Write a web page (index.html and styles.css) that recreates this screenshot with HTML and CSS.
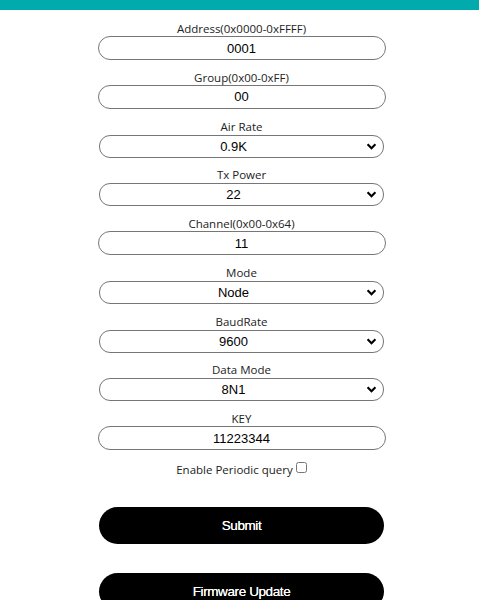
FILE: index.html
```html
<!DOCTYPE html>
<html lang="en">
<head>
	<meta charset="UTF-8">
	<title>LoRa Config</title>
	<link rel="stylesheet" href="styles.css">
</head>
<body>
	<div class="topbar"></div>
	<form class="config" onsubmit="return false;">
		<div class="field">
			<label for="addr">Address(0x0000-0xFFFF)</label>
			<input type="text" id="addr" value="0001">
		</div>
		<div class="field">
			<label for="group">Group(0x00-0xFF)</label>
			<input type="text" id="group" value="00">
		</div>
		<div class="field">
			<label for="airrate">Air Rate</label>
			<select id="airrate">
				<option>0.3K</option>
				<option>1.2K</option>
				<option selected>0.9K</option>
			</select>
		</div>
		<div class="field">
			<label for="txpower">Tx Power</label>
			<select id="txpower">
				<option selected>22</option>
				<option>17</option>
				<option>13</option>
				<option>10</option>
			</select>
		</div>
		<div class="field">
			<label for="channel">Channel(0x00-0x64)</label>
			<input type="text" id="channel" value="11">
		</div>
		<div class="field">
			<label for="mode">Mode</label>
			<select id="mode">
				<option selected>Node</option>
				<option>Relay</option>
			</select>
		</div>
		<div class="field">
			<label for="baud">BaudRate</label>
			<select id="baud">
				<option selected>9600</option>
				<option>115200</option>
			</select>
		</div>
		<div class="field">
			<label for="datamode">Data Mode</label>
			<select id="datamode">
				<option selected>8N1</option>
				<option>8E1</option>
				<option>8O1</option>
			</select>
		</div>
		<div class="field">
			<label for="key">KEY</label>
			<input type="text" id="key" value="11223344">
		</div>
		<div class="check">
			<label for="periodic">Enable Periodic query</label>
			<input type="checkbox" id="periodic">
		</div>
		<button type="submit" class="btn">Submit</button>
		<button type="button" class="btn btn-fw">Firmware Update</button>
	</form>
</body>
</html>
```

FILE: styles.css
```css
* {
	margin: 0;
	padding: 0;
	box-sizing: border-box;
}
body {
	font-family: "Open Sans", "Noto Sans", sans-serif;
	background: #fff;
	color: #000;
}
.topbar {
	height: 10px;
	background: #00aaad;
}
.config {
	width: 288px;
	margin: 12px auto 0;
	position: relative;
	left: 2px;
	display: flex;
	flex-direction: column;
	align-items: center;
}
.field {
	width: 100%;
	display: flex;
	flex-direction: column;
	align-items: center;
	margin-bottom: 10.75px;
}
.field label {
	font-size: 11.5px;
	line-height: 14px;
	color: #222;
}
.field input,
.field select {
	font-family: "Liberation Sans", Arial, sans-serif;
	font-size: 13px;
	color: #000;
	text-align: center;
	background-color: #fff;
	outline: none;
}
.field input {
	width: 288px;
	height: 24px;
	border: 1px solid #767676;
	border-radius: 12px;
}
.field select {
	width: 285px;
	height: 23px;
	margin-top: 1px;
	border: 1px solid #767676;
	border-radius: 11px;
	text-align-last: center;
	appearance: none;
	-webkit-appearance: none;
	padding: 0 16px 0 0;
	background-image: url("data:image/svg+xml;utf8,<svg xmlns='http://www.w3.org/2000/svg' width='12' height='8' viewBox='0 0 12 8'><path d='M1.5 1.5 L6 6 L10.5 1.5' fill='none' stroke='black' stroke-width='2.4'/></svg>");
	background-repeat: no-repeat;
	background-position: right 6px center;
	background-size: 11px 7px;
}
.check {
	display: flex;
	align-items: center;
	gap: 3px;
	font-size: 11.5px;
	line-height: 14px;
	margin-top: 2px;
	color: #222;
}
.check input {
	width: 11px;
	height: 11px;
	margin-top: -4px;
}
.btn {
	width: 285px;
	height: 37px;
	border: none;
	border-radius: 19px;
	background: #000;
	color: #fff;
	font-family: "Liberation Sans", Arial, sans-serif;
	font-size: 13.5px;
	letter-spacing: -0.4px;
	text-shadow: 0 0 0.5px #fff;
	margin-top: 30px;
	cursor: pointer;
}
.btn-fw {
	margin-top: 29px;
}
```
